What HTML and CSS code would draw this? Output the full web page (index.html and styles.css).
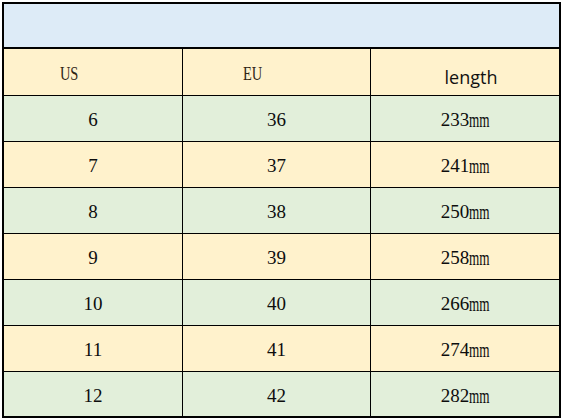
FILE: index.html
```html
<!DOCTYPE html>
<html>
<head>
<meta charset="utf-8">
<link rel="stylesheet" href="styles.css">
</head>
<body>
<div class="sheet">
  <div class="title"></div>
  <div class="grid">
    <div class="cell head"><span class="cond lbl">US</span></div>
    <div class="cell head"><span class="cond lbl">EU</span></div>
    <div class="cell head len">length</div>

    <div class="cell green">6</div><div class="cell green">36</div><div class="cell green">233<span class="mm">mm</span></div>
    <div class="cell yellow">7</div><div class="cell yellow">37</div><div class="cell yellow">241<span class="mm">mm</span></div>
    <div class="cell green">8</div><div class="cell green">38</div><div class="cell green">250<span class="mm">mm</span></div>
    <div class="cell yellow">9</div><div class="cell yellow">39</div><div class="cell yellow">258<span class="mm">mm</span></div>
    <div class="cell green">10</div><div class="cell green">40</div><div class="cell green">266<span class="mm">mm</span></div>
    <div class="cell yellow">11</div><div class="cell yellow">41</div><div class="cell yellow">274<span class="mm">mm</span></div>
    <div class="cell green">12</div><div class="cell green">42</div><div class="cell green">282<span class="mm">mm</span></div>
  </div>
</div>
</body>
</html>
```

FILE: styles.css
```css
html, body {
  margin: 0;
  padding: 0;
  background: #ffffff;
}
body {
  padding: 2px;
  font-family: "Liberation Serif", "Times New Roman", serif;
  color: #0d0d0d;
}
.sheet {
  width: 555px;
  border: 2px solid #000;
}
.title {
  height: 43px;
  background: #ddebf7;
  border-bottom: 2px solid #000;
}
.grid {
  display: grid;
  grid-template-columns: 178px 187px 188px;
  grid-template-rows: 46px repeat(6, 45px) 44px;
  gap: 1px;
  background: #000;
}
.cell {
  display: flex;
  justify-content: center;
  align-items: center;
  padding-top: 3px;
  box-sizing: border-box;
  font-size: 19px;
}
.head {
  background: #fff2cc;
  align-items: flex-start;
  padding-top: 14px;
  padding-right: 48px;
}
.head.len {
  padding-top: 16px;
  padding-right: 0;
  padding-left: 12px;
  font-family: "Open Sans", "Noto Sans", sans-serif;
  font-size: 18px;
  color: #111;
}
.lbl {
  color: #2e2414;
}
.cond {
  display: inline-block;
  transform: scaleX(0.76);
}
.green {
  background: #e2efda;
}
.yellow {
  background: #fff2cc;
}
.mm {
  display: inline-block;
  font-size: 22px;
  line-height: 1;
  transform: scaleX(0.6);
  transform-origin: left center;
  margin-right: -14px;
}
```
